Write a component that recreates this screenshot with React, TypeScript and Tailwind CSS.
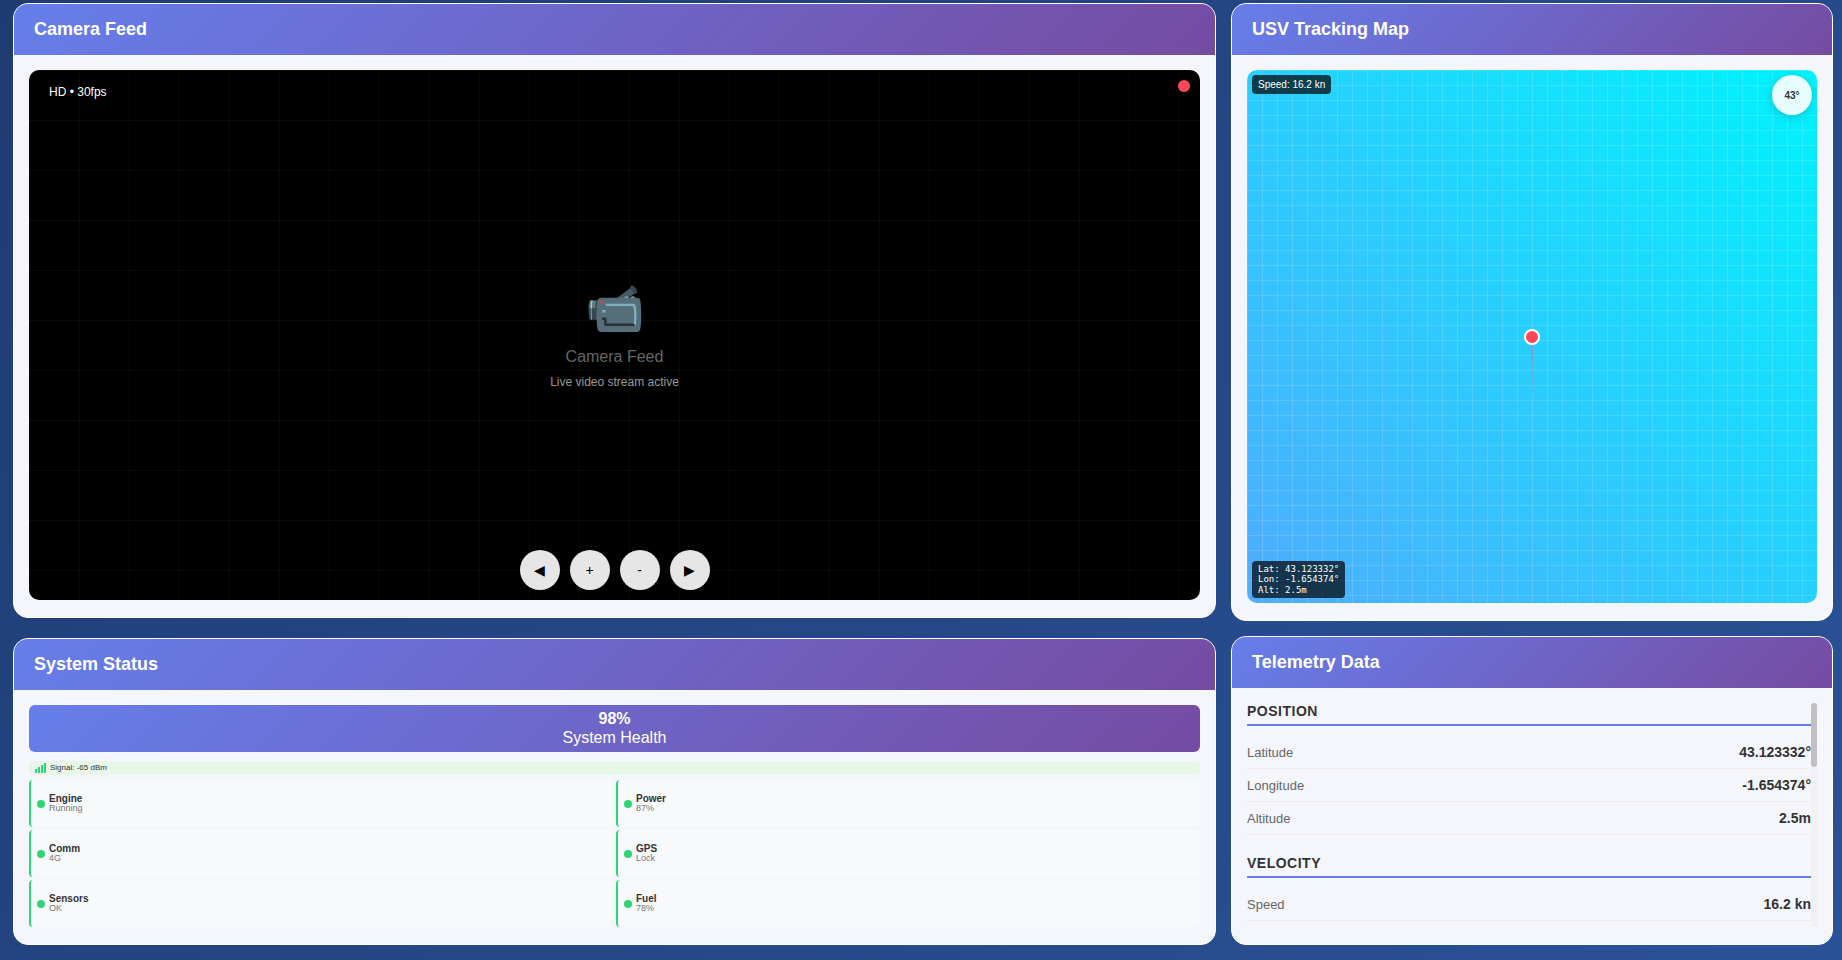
const statusItems = [
  { name: "Engine", value: "Running" },
  { name: "Power", value: "87%" },
  { name: "Comm", value: "4G" },
  { name: "GPS", value: "Lock" },
  { name: "Sensors", value: "OK" },
  { name: "Fuel", value: "78%" },
];

const telemetry = [
  {
    title: "Position",
    rows: [
      ["Latitude", "43.123332°"],
      ["Longitude", "-1.654374°"],
      ["Altitude", "2.5m"],
    ],
  },
  {
    title: "Velocity",
    rows: [["Speed", "16.2 kn"]],
  },
];

const Card = ({ title, className, children }: { title: string; className: string; children: React.ReactNode }) => (
  <div className={`flex flex-col overflow-hidden rounded-[15px] border border-white bg-[#f4f6fb] ${className}`}>
    <div className="h-[51px] shrink-0 bg-[linear-gradient(135deg,#667eea_0%,#764ba2_100%)] px-5 text-lg leading-[51px] font-bold text-white">
      {title}
    </div>
    {children}
  </div>
);

const CameraFeed = () => (
  <div className="relative m-[15px] mb-[17px] flex flex-1 flex-col items-center justify-center overflow-hidden rounded-[10px] bg-black bg-[linear-gradient(rgba(255,255,255,0.04)_1px,transparent_1px),linear-gradient(90deg,rgba(255,255,255,0.04)_1px,transparent_1px)] bg-[size:50px_50px]">
    <div className="absolute top-[15px] left-5 text-xs leading-[15px] text-white">HD • 30fps</div>
    <div className="absolute top-2.5 right-2.5 h-3 w-3 rounded-full bg-[#ff4757]"></div>

    <div className="text-[48px] leading-[56px]">📹</div>
    <div className="mt-[9px] text-base leading-[21px] text-[#666]">Camera Feed</div>
    <div className="mt-[8px] text-xs leading-[14px] text-[#999]">Live video stream active</div>

    <div className="absolute bottom-2.5 left-1/2 flex -translate-x-1/2 gap-2.5">
      {["◀", "+", "-", "▶"].map((label) => (
        <button
          key={label}
          className="flex h-10 w-10 items-center justify-center rounded-full bg-[#e6e6e6] text-sm text-black"
        >
          {label}
        </button>
      ))}
    </div>
  </div>
);

const TrackingMap = () => (
  <div className="relative m-[15px] mb-[17px] flex-1 overflow-hidden rounded-[10px] bg-[linear-gradient(45deg,#4facfe_0%,#00f2fe_100%)]">
    <div className="h-full w-full bg-[linear-gradient(rgba(255,255,255,0.13)_1px,transparent_1px),linear-gradient(90deg,rgba(255,255,255,0.13)_1px,transparent_1px)] bg-[size:15px_15px]"></div>

    <div className="absolute top-[5px] left-[5px] rounded bg-black/70 px-1.5 py-[3px] text-[10px] leading-[13px] text-white">
      Speed: 16.2 kn
    </div>
    <div className="absolute top-[5px] right-[5px] flex h-10 w-10 items-center justify-center rounded-full bg-white/90 text-[10px] font-bold text-[#333] shadow-[0_2px_10px_rgba(0,0,0,0.2)]">
      43°
    </div>

    {/* Marker */}
    <div className="absolute top-[259px] left-[277px] h-4 w-4 rounded-full border-2 border-white bg-[#ff4757]"></div>
    <div className="absolute top-[275px] left-[284px] h-[60px] w-0.5 bg-[linear-gradient(#8a9bb5,transparent)]"></div>

    <div className="absolute bottom-[5px] left-[5px] rounded bg-black/70 px-1.5 py-[3px] font-['DejaVu_Sans_Mono',monospace] text-[9px] leading-[10.5px] text-white">
      <div>Lat: 43.123332°</div>
      <div>Lon: -1.654374°</div>
      <div>Alt: 2.5m</div>
    </div>
  </div>
);

const SystemStatus = () => (
  <div className="flex flex-1 flex-col px-[15px] pt-[15px]">
    <div className="flex h-[47px] flex-col items-center justify-center rounded-md bg-[linear-gradient(135deg,#667eea_0%,#764ba2_100%)] pb-0.5 text-center text-base leading-[19px] text-white">
      <div className="font-bold">98%</div>
      <div>System Health</div>
    </div>

    <div className="mt-[9px] flex h-3.5 items-center gap-1 rounded bg-[#e8f5e9] pl-[6px] text-[8px] text-[#333]">
      <div className="flex h-2.5 items-end gap-px">
        <div className="h-1 w-0.5 bg-[#2ed573]"></div>
        <div className="h-1.5 w-0.5 bg-[#2ed573]"></div>
        <div className="h-2 w-0.5 bg-[#2ed573]"></div>
        <div className="h-2.5 w-0.5 bg-[#2ed573]"></div>
      </div>
      Signal: -65 dBm
    </div>

    <div className="mt-[5px] grid grid-cols-2 gap-[3px]">
      {statusItems.map((item) => (
        <div
          key={item.name}
          className="flex h-[47px] items-center gap-[4px] rounded border-l-2 border-[#2ed573] bg-[#f8f9fa] pl-1.5"
        >
          <div className="h-2 w-2 rounded-full bg-[#2ed573]"></div>
          <div>
            <div className="text-[10px] leading-[10px] font-bold text-[#333]">{item.name}</div>
            <div className="text-[9px] leading-[9px] text-[#777]">{item.value}</div>
          </div>
        </div>
      ))}
    </div>
  </div>
);

const TelemetryData = () => (
  <div className="m-[15px] mb-[17px] flex min-h-0 flex-1">
    <div className="min-w-0 flex-1">
      {telemetry.map((section) => (
        <div key={section.title} className="mb-5">
          <div className="mb-[10px] border-b-2 border-[#667eea] pb-[5px] text-sm leading-4 font-bold tracking-[0.5px] text-[#333] uppercase">
            {section.title}
          </div>
          {section.rows.map(([label, value]) => (
            <div key={label} className="flex h-[33px] items-center justify-between border-b border-[#eeeeee]">
              <span className="mt-0.5 text-[13px] text-[#666]">{label}</span>
              <span className="text-sm font-bold text-[#333]">{value}</span>
            </div>
          ))}
        </div>
      ))}
    </div>

    {/* Scrollbar */}
    <div className="w-1.5 shrink-0 rounded-[3px] bg-[#f1f1f1]">
      <div className="h-16 rounded-[3px] bg-[#c1c1c1]"></div>
    </div>
  </div>
);

export default function App() {
  return (
    <div className="flex h-[960px] gap-[15px] overflow-hidden bg-[linear-gradient(135deg,#1e3c72_0%,#2a5298_100%)] pt-[3px] pl-[13px] font-['Liberation_Sans',Arial,sans-serif]">
      <div className="flex w-[1203px] flex-col gap-5">
        <Card title="Camera Feed" className="h-[615px]">
          <CameraFeed />
        </Card>
        <Card title="System Status" className="h-[307px]">
          <SystemStatus />
        </Card>
      </div>
      <div className="flex w-[602px] flex-col gap-[15px]">
        <Card title="USV Tracking Map" className="h-[618px]">
          <TrackingMap />
        </Card>
        <Card title="Telemetry Data" className="h-[309px]">
          <TelemetryData />
        </Card>
      </div>
    </div>
  );
}
